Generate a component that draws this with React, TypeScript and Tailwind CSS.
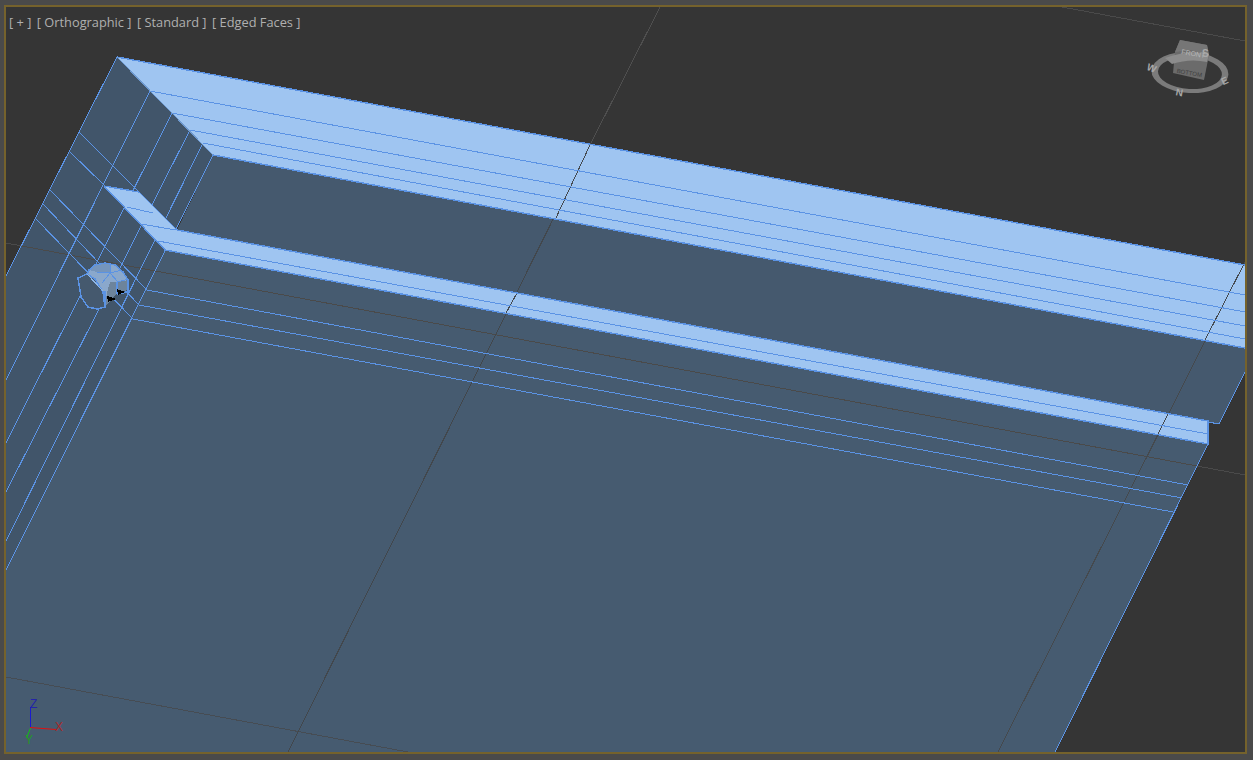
import React from "react";

const EDGE = "#5b93e4";
const GRID = "#4a4a4a";

type L = [number, number, number, number];

const bandLines: L[] = [
  [150, 91, 1245, 295],
  [172, 113, 1245, 312],
  [190, 130, 1245, 326],
  [203, 143, 1245, 339],
  [158, 241, 1208, 434],
  [127, 207, 153, 213],
  [141, 224, 176, 230],
];

const floorLines: L[] = [
  [150, 91, 6, 380],
  [172, 113, 6, 443],
  [190, 130, 6, 492],
  [203, 143, 6, 541],
  [213, 155, 6, 570],
  [147, 290, 1188, 485],
  [139, 305, 1182, 498],
  [133, 319, 1173, 512],
  [50, 190, 147, 290],
  [43, 204, 139, 305],
  [36, 219, 133, 319],
  [69, 151, 105, 186],
  [79, 132, 139, 192],
  [117, 57, 6, 276],
  [1245, 372, 1219, 424],
  [1219, 424, 1208, 422],
  [1208, 444, 1055, 752],
];

function Lines({ items, color }: { items: L[]; color: string }) {
  return (
    <>
      {items.map(([a, b, c, d], i) => (
        <line key={i} x1={a} y1={b} x2={c} y2={d} stroke={color} strokeWidth={1} />
      ))}
    </>
  );
}

function Scene() {
  return (
    <svg
      className="block h-[745px] w-[1239px]"
      viewBox="6 7 1239 745"
      shapeRendering="crispEdges"
    >
      <rect x="6" y="7" width="1239" height="745" fill="#353535" />
      {/* grid lines on background */}
      <line x1="660" y1="7" x2="590" y2="145" stroke="#4f4f4f" />
      <line x1="1062" y1="7" x2="1245" y2="41" stroke="#4a4a4a" />

      {/* floor */}
      <polygon
        points="117,57 213,155 165,250 1208,444 1055,752 6,752 6,276"
        fill="#465b70"
      />
      {/* darker chamfer strip */}
      <polygon points="117,57 213,155 6,570 6,276" fill="#41556a" />
      {/* wall */}
      <polygon points="213,155 1245,348 1245,372 1219,424 1208,422 177,230" fill="#45596e" />

      {/* grid through model */}
      <line x1="6" y1="243" x2="1245" y2="475" stroke={GRID} />
      <line x1="6" y1="677" x2="408" y2="752" stroke="#464c53" />
      <line x1="590" y1="145" x2="288" y2="752" stroke="#42474c" />
      <line x1="1245" y1="262" x2="998" y2="752" stroke="#45494d" />

      <Lines items={floorLines} color={EDGE} />

      {/* light bands */}
      <polygon points="117,57 1245,265 1245,348 213,155" fill="#9fc5f1" />
      <polygon points="104,186 139,192 177,230 1208,421 1208,444 165,250" fill="#9fc5f1" />

      {/* grid over bands */}
      <line x1="590" y1="145" x2="555" y2="220" stroke="#454a50" />
      <line x1="517" y1="293" x2="505" y2="315" stroke="#454a50" />
      <line x1="1245" y1="262" x2="1204" y2="342" stroke="#454a50" />
      <line x1="1168" y1="414" x2="1158" y2="434" stroke="#454a50" />

      <Lines items={bandLines} color={EDGE} />

      {/* band outlines */}
      <line x1="117" y1="57" x2="1245" y2="265" stroke={EDGE} strokeWidth={1.4} />
      <line x1="213" y1="155" x2="1245" y2="348" stroke={EDGE} strokeWidth={1.4} />
      <line x1="117" y1="57" x2="213" y2="155" stroke="#6f9ad0" />
      <polyline
        points="104,186 139,192 177,230 1208,421 1208,444 165,250 104,186"
        fill="none"
        stroke={EDGE}
        strokeWidth={1.4}
      />

      {/* knob */}
      <polygon
        points="87,274 89,270 95,265 105,263 115,265 123,272 128,280 128,290 117,293 105,307 95,279"
        fill="#8aa8cc"
      />
      <polygon points="107,293 110,282 118,282 128,280 128,290 117,293 105,307" fill="#6d849c" />
      <polygon points="89,270 95,265 105,263 110,263 110,273 97,272" fill="#7595bc" />
      <polyline
        points="87,274 89,270 95,265 105,263 115,265 123,272 128,280 128,292 117,294"
        fill="none"
        stroke={EDGE}
        strokeWidth={1.5}
      />
      <polyline points="97,272 110,273 122,270" fill="none" stroke={EDGE} />
      <polyline points="110,263 110,273 102,283" fill="none" stroke={EDGE} />
      <polyline points="110,273 118,282 128,279" fill="none" stroke={EDGE} />
      <line x1="117" y1="282" x2="117" y2="294" stroke={EDGE} strokeWidth={2} />
      <polygon
        points="78,278 87,274 95,279 103,292 105,307 97,309 88,307 81,297"
        fill="#45596e"
        stroke={EDGE}
        strokeWidth={1.5}
      />
      <line x1="105" y1="291" x2="105" y2="307" stroke={EDGE} strokeWidth={2.5} />
      <line x1="87" y1="274" x2="103" y2="291" stroke="#8fb6e6" strokeWidth={1} />
      <polygon points="107,296 116,299 108,302" fill="#000" />
      <polygon points="117,289 125,292 118,295" fill="#000" />

      {/* view cube */}
      <g shapeRendering="auto">
        <ellipse cx="1190" cy="72.5" rx="38.5" ry="20.5" fill="#7b7b7b" transform="rotate(3 1190 72)" />
        <ellipse cx="1190" cy="73" rx="32" ry="16" fill="#363636" transform="rotate(3 1190 72)" />
        <polygon points="1180,40 1207,45 1209,55 1204,80 1173,73 1175,52" fill="#6b6b6b" />
        <polygon points="1175,52 1180,40 1207,45 1209,55 1190,50" fill="#767676" />
        <path d="M1165 58 Q 1190 49 1209 54 L1207 62 Q 1190 58 1172 64 Z" fill="#8c8c8c" />
        <text x="1193" y="56" textAnchor="middle" fontSize="7" fontFamily="Liberation Sans, sans-serif" fill="#b5b5b5" transform="rotate(10 1193 55)">
          FRONT
        </text>
        <text x="1189" y="75" textAnchor="middle" fontSize="6" fontFamily="Liberation Sans, sans-serif" fill="#404040" transform="rotate(10 1189 75)">
          BOTTOM
        </text>
        <g fontFamily="Liberation Sans, sans-serif" fontSize="10" fill="#a8a8a8" fontWeight="700">
          <text x="1147" y="72" transform="rotate(22 1153 68)">W</text>
          <text x="1221" y="84" transform="rotate(-24 1225 80)">E</text>
          <text x="1176" y="96" transform="rotate(10 1180 92)">N</text>
          <text x="1202" y="57">S</text>
        </g>
      </g>

      {/* axis tripod */}
      <g shapeRendering="auto">
        <line x1="30.5" y1="707" x2="30.5" y2="728" stroke="#1a1ad0" />
        <line x1="30" y1="727.5" x2="56" y2="729.5" stroke="#e01010" />
        <line x1="30.5" y1="728" x2="26.5" y2="738" stroke="#12c012" />
        <g fontFamily="Liberation Sans, sans-serif" fontSize="12">
          <text x="30" y="708" fill="#2424a8">Z</text>
          <text x="55" y="731" fill="#a82a2a">X</text>
          <text x="25" y="744" fill="#24962a">Y</text>
        </g>
      </g>
    </svg>
  );
}

export default function App() {
  return (
    <div className="h-[760px] w-[1253px] overflow-hidden bg-[#4a4a4a] pl-[4px] pt-[5px]">
      <div className="relative h-[749px] w-[1243px] border-2 border-[#75622c]">
        <Scene />
        <div className="absolute left-[3px] top-[6px] flex gap-[5.5px] whitespace-pre font-['Open_Sans',sans-serif] text-[12.8px] leading-[18px] text-[#b0b0b0]">
          <span>[ + ]</span>
          <span>[ Orthographic ]</span>
          <span>[ Standard ]</span>
          <span>[ Edged Faces ]</span>
        </div>
      </div>
    </div>
  );
}
